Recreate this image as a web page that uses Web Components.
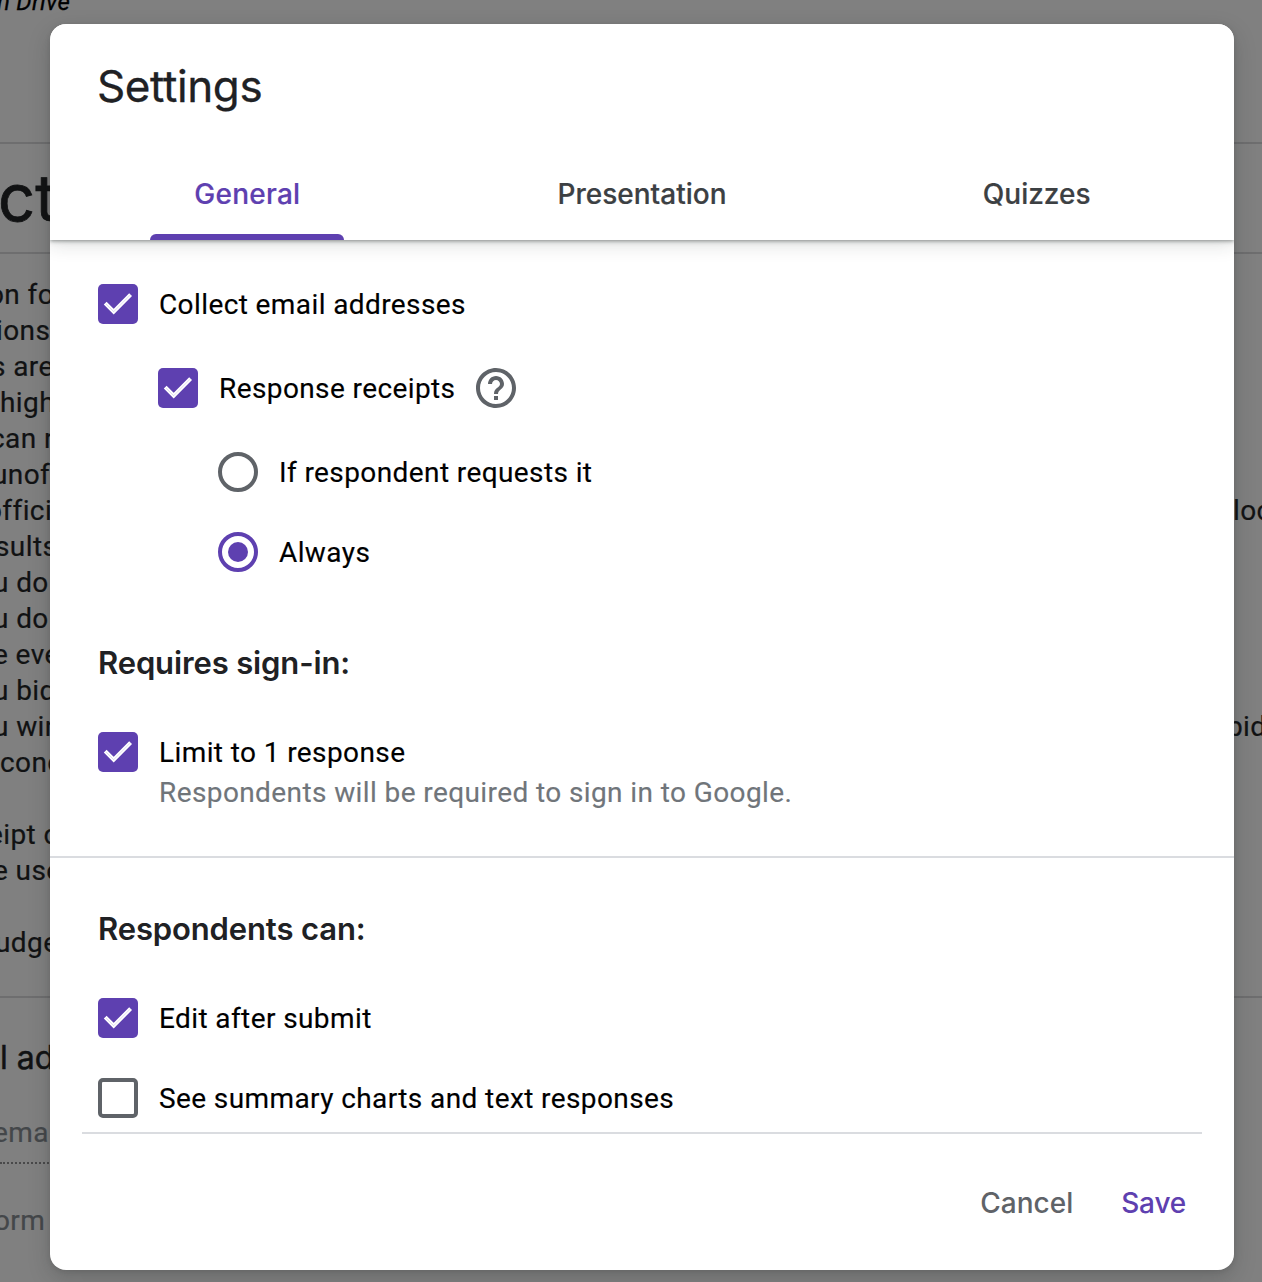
<!DOCTYPE html>
<html lang="en">
<head>
<meta charset="utf-8">
<title>Settings</title>
<style>
html,body{margin:0;height:100%;overflow:hidden}
body{font-family:Roboto,"Liberation Sans",sans-serif}
</style>
</head>
<body>
<forms-app></forms-app>
<script>
const define = (name, html) => customElements.define(name, class extends HTMLElement {
  constructor() {
    super();
    this.attachShadow({ mode: 'open' }).innerHTML = html;
  }
});

define('form-line', `<style>
:host{display:block;height:36px;line-height:36px;white-space:pre;font-size:28px;letter-spacing:.4px;-webkit-text-stroke:.2px currentColor}
</style><slot></slot>`);

define('form-page', `<style>
:host{display:flex;flex-direction:column;width:1262px;height:1282px;overflow:hidden;background:#808080;color:#111213}
.drive{height:142px;font-size:24px;font-style:italic;line-height:28px;color:#000;letter-spacing:.3px;-webkit-text-stroke:.3px #000}
.drive span{display:block;margin:-12px 0 0 -3px}
.title,.para,.email{border-top:2px solid #6e6e6f;box-sizing:border-box}
.title{height:110px;font:400 65px/107px Inter,sans-serif;-webkit-text-stroke:.8px #111213}
.title span{margin-left:-2px}
.para{height:744px;padding-top:23px;display:flex;justify-content:space-between}
.right{width:35px}
.gap{height:36px}
.email{height:286px;display:flex;flex-direction:column}
.q{font:400 32px/40px Inter,sans-serif;margin:40px 0 0 0;white-space:pre;-webkit-text-stroke:.5px #111213}
.field{margin-top:34px;height:50px;width:200px;border-bottom:2px dotted #49494a;color:#44474a}
.field form-line{padding-top:3px}
.note{margin-top:39px;color:#44474a}
</style>
<div class="drive"><span>n Drive</span></div>
<div class="title"><span>ct</span></div>
<div class="para"><div>
<form-line style="margin-left:-12px">on fo</form-line>
<form-line style="margin-left:-4px">ions</form-line>
<form-line style="margin-left:-9px">s are</form-line>
<form-line>high</form-line>
<form-line style="margin-left:-10px">can r</form-line>
<form-line style="margin-left:-8px">unof</form-line>
<form-line style="margin-left:-14px">offici</form-line>
<form-line style="margin-left:-5px">sults</form-line>
<form-line style="margin-left:-7px">u do</form-line>
<form-line style="margin-left:-7px">u do</form-line>
<form-line style="margin-left:-7px">e eve</form-line>
<form-line style="margin-left:-7px">u bid</form-line>
<form-line style="margin-left:-7px">u win</form-line>
<form-line style="margin-left:0">cond</form-line>
<div class="gap"></div>
<form-line style="margin-left:-12px">eipt o</form-line>
<form-line style="margin-left:-7px">e use</form-line>
<div class="gap"></div>
<form-line style="margin-left:-5px">udge</form-line>
</div>
<div class="right">
<form-line style="margin-top:216px;margin-left:6px">loc</form-line>
<form-line style="margin-top:180px;margin-left:0">bid</form-line>
</div></div>
<div class="email">
<div class="q"><span>l ad</span></div>
<div class="field"><form-line style="margin-left:-7px">ema</form-line></div>
<form-line class="note" style="margin-left:-6px">orm</form-line>
</div>`);

define('check-box', `<style>
:host{display:block;flex:none;width:40px;height:40px;box-sizing:border-box;border:4px solid #5f6368;border-radius:5px}
:host([checked]){border:0;background:#5e40b0}
svg{display:none}
:host([checked]) svg{display:block}
</style>
<svg width="40" height="40" viewBox="0 0 40 40" fill="none"><path d="M7.2 19.2 15.7 27.7 32.6 10.6" stroke="#fff" stroke-width="4"/><path d="M8 20 15.7 27.7 32 11.2" stroke="#5e40b0" stroke-opacity=".3" stroke-width=".6"/></svg>`);

define('radio-button', `<style>
:host{display:flex;flex:none;align-items:center;justify-content:center;width:40px;height:40px;box-sizing:border-box;border:4px solid #5f6368;border-radius:50%}
:host([checked]){border-color:#5e40b0}
i{display:none;width:20px;height:20px;border-radius:50%;background:#5e40b0}
:host([checked]) i{display:block}
</style><i></i>`);

define('help-icon', `<style>:host{display:block;width:40px;height:40px;margin-left:21px}svg{display:block}</style>
<svg width="40" height="40" viewBox="2 2 20 20" fill="#5f6368"><path d="M11 18h2v-2h-2v2zm1-16C6.48 2 2 6.48 2 12s4.48 10 10 10 10-4.48 10-10S17.52 2 12 2zm0 18c-4.41 0-8-3.59-8-8s3.59-8 8-8 8 3.59 8 8-3.59 8-8 8zm0-14c-2.21 0-4 1.79-4 4h2c0-1.1.9-2 2-2s2 .9 2 2c0 2-3 1.75-3 5h2c0-2.25 3-2.5 3-5 0-2.21-1.79-4-4-4z"/></svg>`);

define('option-row', `<style>
:host{display:flex;align-items:center;height:40px;font-size:28px;line-height:40px;letter-spacing:.4px;color:#000;white-space:nowrap;-webkit-text-stroke:.15px #000}
.label{margin-left:21px;padding-top:2px}
</style><slot name="control"></slot><span class="label"><slot></slot></span><slot name="help"></slot>`);

define('section-title', `<style>
:host{display:block;font:600 31px/40px Inter,sans-serif;letter-spacing:-.13px;color:#202124;white-space:nowrap}
</style><slot></slot>`);

define('tab-item', `<style>
:host{display:flex;flex:1;flex-direction:column;align-items:center;height:92px;font:500 28px/92px Inter,sans-serif;letter-spacing:var(--track,0);color:#3c4043;-webkit-text-stroke:.2px currentColor}
span{height:86px;line-height:93px}
i{width:194px;height:6px;border-radius:6px 6px 0 0}
:host([selected]){color:#5e40b0}
:host([selected]) i{background:#5e40b0}
</style><span><slot></slot></span><i></i>`);

define('text-button', `<style>
:host{display:block;font:500 28px/42px Inter,sans-serif;color:#5f6368;letter-spacing:var(--track,0)}
:host([primary]){color:#5e40b0}
</style><slot></slot>`);

define('settings-dialog', `<style>
:host{display:flex;flex-direction:column;width:1184px;height:1246px;margin:24px 0 0 50px;background:#fff;border-radius:16px;overflow:hidden;box-shadow:0 8px 22px rgba(32,36,36,.22),0 1px 5px rgba(32,36,36,.14)}
header{height:216px;box-sizing:border-box;display:flex;flex-direction:column;justify-content:space-between;box-shadow:0 1px 4px rgba(32,40,38,.5),0 4px 18px rgba(32,40,38,.16);background:#fff;z-index:1}
h1{margin:33px 0 0 47px;font:400 44px/58px Inter,sans-serif;letter-spacing:-.4px;color:#202124;-webkit-text-stroke:.3px #202124}
nav{display:flex}
main{height:892px;display:flex;flex-direction:column}
.first{display:flex;flex-direction:column;height:616px;box-sizing:border-box;padding:44px 48px 0}
.second{display:flex;flex-direction:column;border-top:2px solid #dadce0;padding:51px 48px 0;height:223px}
.hint{margin-left:61px;padding-top:1px;font-size:28px;line-height:40px;letter-spacing:.4px;color:#70757a;-webkit-text-stroke:.15px #70757a}
footer{margin:0 32px;border-top:2px solid #dadce0;display:flex;justify-content:flex-end;gap:48px;padding:48px 16px 0}
</style>
<header><h1>Settings</h1><nav>
<tab-item selected style="--track:.25px">General</tab-item><tab-item>Presentation</tab-item><tab-item>Quizzes</tab-item></nav></header>
<main><section class="first">
<option-row><check-box slot="control" checked></check-box>Collect email addresses</option-row>
<option-row style="margin:44px 0 0 60px"><check-box slot="control" checked></check-box>Response receipts<help-icon slot="help"></help-icon></option-row>
<option-row style="margin:44px 0 0 120px"><radio-button slot="control"></radio-button>If respondent requests it</option-row>
<option-row style="margin:40px 0 0 120px"><radio-button slot="control" checked></radio-button>Always</option-row>
<section-title style="margin-top:71px">Requires sign-in:</section-title>
<option-row style="margin-top:49px"><check-box slot="control" checked></check-box>Limit to 1 response</option-row>
<div class="hint">Respondents will be required to sign in to Google.</div>
</section><section class="second">
<section-title>Respondents can:</section-title>
<option-row style="margin-top:49px"><check-box slot="control" checked></check-box>Edit after submit</option-row>
<option-row style="margin-top:40px"><check-box slot="control"></check-box>See summary charts and text responses</option-row>
</section></main>
<footer><text-button>Cancel</text-button><text-button primary style="--track:-.2px">Save</text-button></footer>`);

define('forms-app', `<style>
:host{display:grid;width:1262px;height:1282px;overflow:hidden}
form-page,settings-dialog{grid-area:1/1}
</style><form-page></form-page><settings-dialog></settings-dialog>`);
</script>
</body>
</html>
